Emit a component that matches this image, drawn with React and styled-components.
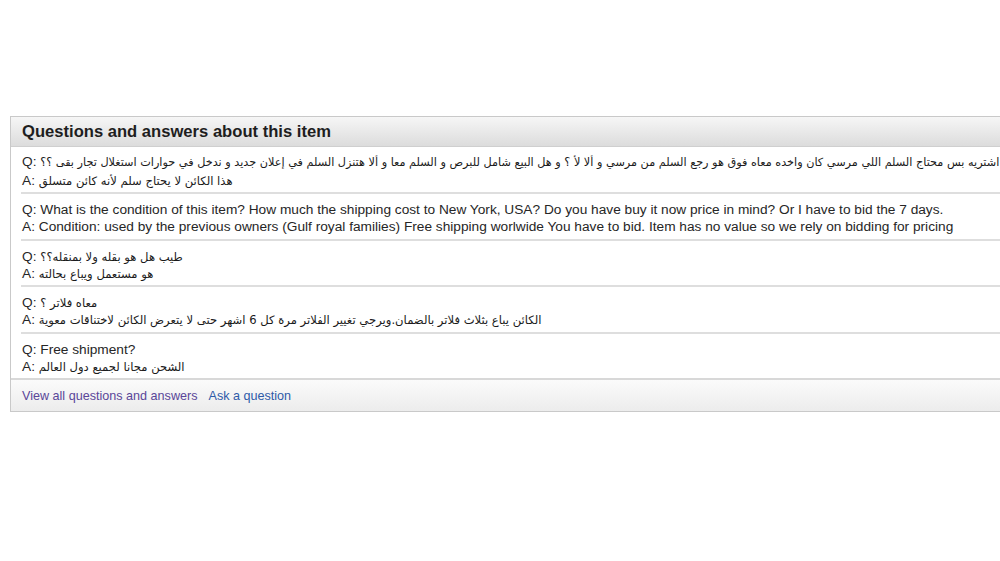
import React from 'react'
import styled, { createGlobalStyle } from 'styled-components'

const GlobalStyle = createGlobalStyle`
  html, body {
    margin: 0;
    padding: 0;
    background: #ffffff;
    overflow: hidden;
  }
  body {
    font-family: "Liberation Sans", Arial, "DejaVu Sans", sans-serif;
    color: #222;
  }
`

const Page = styled.div`
  width: 1000px;
  height: 561px;
  overflow: hidden;
  padding: 116px 0 0 10px;
  box-sizing: border-box;
`

const Panel = styled.section`
  width: 1020px;
  border: 1px solid #c9c9c9;
  border-right: none;
  background: #fff;
`

const Header = styled.h2`
  margin: 0;
  height: 29px;
  display: flex;
  align-items: center;
  padding: 0 11px;
  font-size: 16.6px;
  font-weight: bold;
  color: #1e1e1e;
  background: linear-gradient(#f6f6f6, #dcdcdc);
  border-bottom: 1px solid #cfcfcf;
`

const List = styled.div`
  padding-left: 10px;
`

const Row = styled.div`
  padding: ${p => (p.$tall ? '5px 0 2px 1px' : '7px 0 3.5px 1px')};
  border-bottom: ${p => (p.$last ? 'none' : '2px solid #dedede')};
`

const Line = styled.div`
  font-size: 13.7px;
  height: ${p => (p.$tall ? '19px' : '17px')};
  line-height: ${p => (p.$tall ? '19px' : '17px')};
  white-space: nowrap;
  color: #262626;
`

const Arabic = styled.bdi`
  direction: rtl;
  unicode-bidi: isolate;
  font-family: "DejaVu Sans", sans-serif;
  font-size: ${p => (p.$small ? '11.25px' : '11.6px')};
  color: #1a1a1a;
`

const Footer = styled.div`
  height: 31px;
  display: flex;
  align-items: center;
  gap: 11px;
  padding: 0 11px;
  background: linear-gradient(#fbfbfb, #ececec);
  border-top: 2px solid #d8d8d8;
`

const Link = styled.a`
  font-size: 12.6px;
  color: ${p => (p.$visited ? '#5a4699' : '#2f5aa8')};
  text-decoration: none;
  cursor: pointer;
`

const qa = [
  {
    tall: true,
    q: 'اشتريه بس محتاج السلم اللي مرسي كان واخده معاه فوق هو رجع السلم من مرسي و ألا لأ ؟ و هل البيع شامل للبرص و السلم معا و ألا هتنزل السلم في إعلان جديد و ندخل في حوارات استغلال تجار بقى ؟؟',
    a: 'هذا الكائن لا يحتاج سلم لأنه كائن متسلق',
    arabic: true,
  },
  {
    q: 'What is the condition of this item? How much the shipping cost to New York, USA? Do you have buy it now price in mind? Or I have to bid the 7 days.',
    a: 'Condition: used by the previous owners (Gulf royal families) Free shipping worlwide You have to bid. Item has no value so we rely on bidding for pricing',
  },
  {
    q: 'طيب هل هو بقله ولا بمنقله؟؟',
    a: 'هو مستعمل ويباع بحالته',
    arabic: true,
  },
  {
    q: 'معاه فلاتر ؟',
    a: 'الكائن يباع بثلاث فلاتر بالضمان.ويرجي تغيير الفلاتر مرة كل 6 اشهر حتى لا يتعرض الكائن لاختناقات معوية',
    arabic: true,
  },
  {
    q: 'Free shipment?',
    a: 'الشحن مجانا لجميع دول العالم',
    aArabic: true,
  },
]

const Text = ({ children, rtl, small }) =>
  rtl ? <Arabic $small={small}>{children}</Arabic> : <>{children}</>

const App = () => {
  return (
    <Page>
      <GlobalStyle />
      <Panel>
        <Header>Questions and answers about this item</Header>
        <List>
          {qa.map((item, i) => (
            <Row key={i} $tall={item.tall} $last={i === qa.length - 1}>
              <Line $tall={item.tall}>
                Q: <Text rtl={item.arabic} small={item.tall}>{item.q}</Text>
              </Line>
              <Line $tall={item.tall}>
                A: <Text rtl={item.arabic || item.aArabic}>{item.a}</Text>
              </Line>
            </Row>
          ))}
        </List>
        <Footer>
          <Link $visited>View all questions and answers</Link>
          <Link>Ask a question</Link>
        </Footer>
      </Panel>
    </Page>
  )
}

export default App
